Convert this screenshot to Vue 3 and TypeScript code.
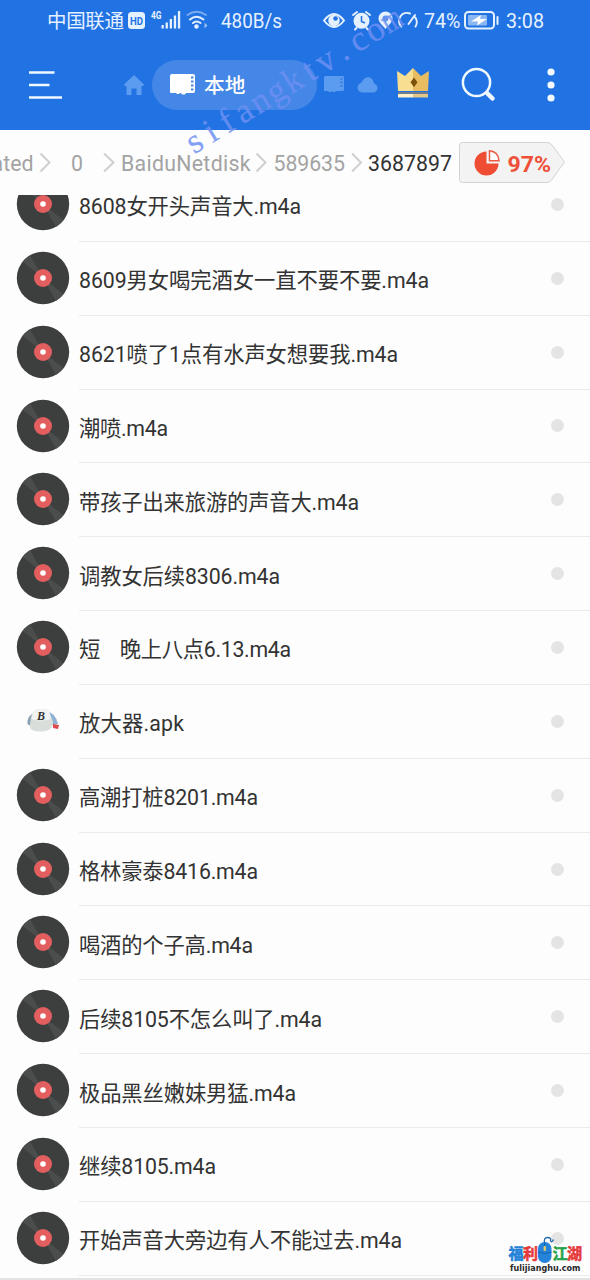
<script setup lang="ts">
interface FileRow {
  name: string
  kind: 'audio' | 'apk'
  width: number
}

const files: FileRow[] = [
  { name: '8608女开头声音大.m4a', kind: 'audio', width: 222 },
  { name: '8609男女喝完酒女一直不要不要.m4a', kind: 'audio', width: 350 },
  { name: '8621喷了1点有水声女想要我.m4a', kind: 'audio', width: 319 },
  { name: '潮喷.m4a', kind: 'audio', width: 89 },
  { name: '带孩子出来旅游的声音大.m4a', kind: 'audio', width: 280 },
  { name: '调教女后续8306.m4a', kind: 'audio', width: 201 },
  { name: '短\u00a0\u00a0\u00a0\u00a0晚上八点6.13.m4a', kind: 'audio', width: 212 },
  { name: '放大器.apk', kind: 'apk', width: 105 },
  { name: '高潮打桩8201.m4a', kind: 'audio', width: 179 },
  { name: '格林豪泰8416.m4a', kind: 'audio', width: 179 },
  { name: '喝酒的个子高.m4a', kind: 'audio', width: 174 },
  { name: '后续8105不怎么叫了.m4a', kind: 'audio', width: 243 },
  { name: '极品黑丝嫩妹男猛.m4a', kind: 'audio', width: 217 },
  { name: '继续8105.m4a', kind: 'audio', width: 137 },
  { name: '开始声音大旁边有人不能过去.m4a', kind: 'audio', width: 323 },
]

// Left edge of each letter, centred on an even pitch
const pitch = 19.3
const advances = [13.6, 9.7, 11.7, 15.5, 17.5, 17.5, 17.5, 9.7, 17.5, 8.8, 15.5, 17.5]
const siteX = advances.map((w, i) => (i * pitch - w / 2).toFixed(1)).join(' ')
</script>

<template>
  <div class="screen">
    <header class="top">
      <svg class="status" width="590" height="42" viewBox="0 0 590 42">
        <g fill="#e6f1ff">
          <text x="47" y="28" font-size="19.5" textLength="77">中国联通</text>
          <rect x="128" y="12" width="17" height="17" rx="3.5" />
          <text class="hd" x="130" y="24.5" font-size="10.5" textLength="13" lengthAdjust="spacingAndGlyphs">HD</text>
          <text x="151" y="18.5" font-size="10" font-weight="700" textLength="10.500" lengthAdjust="spacingAndGlyphs">4G</text>
          <rect x="161.500" y="25" width="2.300" height="3.500" />
          <rect x="165.600" y="22.500" width="2.300" height="6" />
          <rect x="169.700" y="19" width="2.300" height="9.500" />
          <rect x="173.800" y="15.500" width="2.300" height="13" />
          <rect x="177.900" y="11" width="2.300" height="17.500" />
          <circle cx="196.500" cy="26.500" r="2.200" />
          <path d="M204.500 22.500l3 3-3 3z" opacity=".6" />
          <text x="221" y="28.200" font-size="19.500" textLength="61" lengthAdjust="spacingAndGlyphs">480B/s</text>
          <text x="424" y="28.200" font-size="19.500" textLength="36.500" lengthAdjust="spacingAndGlyphs">74%</text>
          <text x="506" y="28.200" font-size="19.500" textLength="38" lengthAdjust="spacingAndGlyphs">3:08</text>
        </g>
        <g fill="none" stroke="#e6f1ff" stroke-width="2" stroke-linecap="round">
          <path d="M187.500 15q9-6.500 18.500 0" opacity=".45" />
          <path d="M190 19.500q6.500-5.500 13.500 0M193 23q3.500-3 7.500 0" />
          <path d="M324 20.500q10-13 20 0q-10 13-20 0z" />
          <path d="M353 15l4-3M370 15l-4-3M356.500 28l-1.500 1.500M366.500 28l1.500 1.500" />
          <path d="M401.300 26.500a8 8 0 0 1 8.700-13M414.500 16.500a8 8 0 0 1 1 10M408.500 24l6.500-9" />
          <rect x="465" y="12" width="29" height="16.500" rx="3.500" />
          <path d="M497.500 17v7" />
        </g>
        <circle cx="334" cy="20.500" r="5.700" fill="#e6f1ff" />
        <circle cx="335.500" cy="18.500" r="2.300" fill="#2173e3" />
        <circle cx="361.500" cy="20.800" r="8" fill="#e6f1ff" />
        <path d="M361.500 16v5.500l3.500 1.500" fill="none" stroke="#2173e3" stroke-width="1.500" />
        <path d="M385.500 29c-3-4-7-6.500-7-10.500a7 7 0 0 1 14 0c0 4-4 6.500-7 10.500z" fill="#e6f1ff" />
        <circle cx="385.500" cy="18.500" r="3" fill="#5b93ea" />
        <rect x="468" y="15" width="19" height="10.500" rx="1" fill="#8ab7f2" />
        <path d="M481 15l-10 6.500h7l-1 4 10-6.500h-7z" fill="#fff" />
      </svg>

      <nav class="toolbar">
        <svg class="menu" width="34" height="30" viewBox="0 0 34 30">
          <path d="M0 2.500h25.500M0 15h20.500M0 27.500h33" stroke="#eff7ff" stroke-width="2.400" />
        </svg>
        <svg class="home" width="20" height="20" viewBox="0 0 20 20">
          <path d="M10 0l10 9.500-1 1.500h-1.500v9h-5v-6.500h-5V20h-5v-9H1L0 9.500z" fill="#5b9bf0" />
        </svg>
        <div class="tab">
          <svg width="25" height="21" viewBox="0 0 25 21">
            <path d="M2 0h21a2 2 0 0 1 2 2v15a2 2 0 0 1-2 2h-7l-1 1.500h-3L11 19h-1l-1 1h-2l-1-1H1a1 1 0 0 1-1-1V2a2 2 0 0 1 2-2z" fill="#fff" />
            <path d="M21 3.500h2.500M21 7.500h2.500M21 11.500h2.500M21 15.500h2.500" stroke="#4487e6" stroke-width="1.800" />
          </svg>
          <span>本地</span>
        </div>
        <svg class="card" width="20" height="17" viewBox="0 0 20 17">
          <path d="M1 0h18l1 1v13l-1 1h-7l-1 1H9l-1-1-1 1H5l-1-1H0V1z" fill="#5b9bf0" />
          <path d="M16.500 3h2M16.500 6.500h2M16.500 10h2" stroke="#2d79e5" stroke-width="1.300" />
        </svg>
        <svg class="cloud" width="21" height="17" viewBox="0 0 21 17">
          <path d="M5 16.500a5 5 0 0 1-1.500-9.500Q5.500 6.500 6 4A5.500 5.500 0 0 1 16 5q.3 2 2 3a4.500 4.500 0 0 1-2 8.500z" fill="#5b9bf0" />
        </svg>
        <svg class="crown" width="34" height="32" viewBox="0 0 34 32">
          <path d="M1 4l8 5 8-8v23H2z" fill="#f8de91" />
          <path d="M33 4l-8 5-8-8v23h15z" fill="#e8bd61" />
          <path d="M2 25h30v2H2z" fill="#6e7c8d" />
          <path d="M2 27h15v3.500H2z" fill="#fff1cb" />
          <path d="M17 27h15v3.500H17z" fill="#e2c889" />
          <path d="M18 10.500l3.500 4.800-3.500 5-3.500-5z" fill="#7c5109" />
        </svg>
        <svg class="search" width="36" height="36" viewBox="0 0 36 36">
          <circle cx="15.500" cy="15.500" r="13.600" fill="none" stroke="#f0f9ff" stroke-width="2.500" />
          <path d="M24.500 25l2 2" stroke="#f0f9ff" stroke-width="2.500" />
          <path d="M26.500 26.500l5 5" stroke="#f0f9ff" stroke-width="4.500" stroke-linecap="round" />
        </svg>
        <svg class="more" width="8" height="34" viewBox="0 0 8 34">
          <g fill="#f4faff"><circle cx="4" cy="4" r="3.600" /><circle cx="4" cy="17" r="3.600" /><circle cx="4" cy="30" r="3.600" /></g>
        </svg>
      </nav>
    </header>

    <svg class="crumbs" width="590" height="65" viewBox="0 0 590 65">
      <g class="crumb">
        <text x="-8.500" y="40.800" textLength="42">ated</text>
        <text x="71" y="40.800">0</text>
        <text x="121" y="40.800" textLength="129.500">BaiduNetdisk</text>
        <text x="273.500" y="40.800" textLength="71.500">589635</text>
        <text class="current" x="368" y="40.800" textLength="84">3687897</text>
      </g>
      <path d="M40.500 23.500l9 9-9 9M104 23.500l9.500 9-9.500 9M256.500 23.500l9 9-9 9M352 23.500l9 9-9 9" fill="none" stroke="#cfcfcf" stroke-width="2" />
      <path d="M462.500 12.500H547q3 0 5 2.500l12.500 17L552 49.500q-2 3-5 3h-84.500q-3 0-3-3v-34q0-3 3-3z" fill="#f3f3f3" stroke="#d3d3d3" />
      <path d="M486.500 21.500v12h12a12 12 0 1 1-12-12z" fill="#ee4d34" />
      <path d="M489.500 20.800v10h9.500q-.5-9-9.500-10z" fill="#fff" stroke="#ee5a42" stroke-width="1.500" />
      <text class="percent" x="507.500" y="42" textLength="43.500" lengthAdjust="spacingAndGlyphs">97%</text>
    </svg>

    <main class="list">
      <div class="rows">
        <div v-for="file in files" :key="file.name" class="row">
          <div class="thumb">
            <svg v-if="file.kind === 'audio'" width="54" height="54" viewBox="-27 -27 54 54">
              <circle r="26.200" fill="#3d3f3e" />
              <path d="M0 0L-20.500-16.300A26.200 26.200 0 0 1-13-22.700zM0 0L20.500 16.300A26.200 26.200 0 0 1 13 22.700z" fill="#4b4d4c" />
              <circle r="9" fill="#e35f5f" />
              <circle r="2.800" fill="#fff" />
            </svg>
            <svg v-else width="54" height="54" viewBox="-27 -27 54 54">
              <path d="M4-9q8 0 11 12l-6 1z" fill="#8fb2d4" />
              <path d="M10 3l6 1-1 4-5-1z" fill="#dc4b4b" />
              <path d="M-11-7q-5 3-4.500 10l3 2z" fill="#8ba1b3" />
              <path d="M-10-9q2-3 8-3t8 2l4 11q0 9-12 9.500T-13 4q0-7 3-13z" fill="#d9dedb" />
              <path d="M-9.500-9q2-3 8-3t7.500 2l2 8q-9 3-19.500 0z" fill="#f1f3f2" />
              <text class="badge" x="-6" y="-1.500">B</text>
            </svg>
          </div>
          <div class="body">
            <svg class="name" :width="file.width + 6" height="32">
              <text x="0" y="24" :textLength="file.width">{{ file.name }}</text>
            </svg>
            <i class="dot" />
          </div>
        </div>
      </div>
    </main>

    <svg class="overlay" width="590" height="1280" viewBox="0 0 590 1280">
      <g class="site" transform="translate(200 151) rotate(-31.800)">
        <text :x="siteX">sifangktv.co</text>
        <text x="222" textLength="19.500" lengthAdjust="spacingAndGlyphs">m</text>
      </g>
      <g class="logo">
        <text x="508.500" y="1258.500" fill="#2483d8" stroke="#2483d8">福</text>
        <text x="523" y="1258.500" fill="#e53a3b" stroke="#e53a3b">利</text>
        <text x="552.500" y="1258.500" fill="#25a34a" stroke="#25a34a">江</text>
        <text x="567" y="1258.500" fill="#e53a3b" stroke="#e53a3b">湖</text>
      </g>
      <path d="M544.500 1243q-1-5.500 3-5.500t3 3q1 3 3-1" fill="none" stroke="#2667a5" stroke-width="1.300" />
      <rect x="538" y="1242" width="13.500" height="21" rx="6.500" fill="#2484d9" />
      <path d="M538 1252q7 3 13.500 0M544.700 1242v4" fill="none" stroke="#1764ad" />
      <rect x="543.600" y="1246" width="2.300" height="5" rx="1" fill="#e8cb62" />
      <text class="domain" x="510" y="1270.500" textLength="70.500" lengthAdjust="spacingAndGlyphs">fulijianghu.com</text>
    </svg>
  </div>
</template>

<style>
body { margin: 0; background: #fdfdfd; }
</style>

<style scoped>
.screen {
  position: relative;
  display: flex;
  flex-direction: column;
  width: 590px;
  height: 1280px;
  overflow: hidden;
  background: #fdfdfd;
  font-family: Roboto, "Noto Sans CJK SC", sans-serif;
}
svg { display: block; flex: none; }
.top { height: 129.500px; flex: none; background: #2173e3; }
.hd { fill: #2173e3; font-weight: 700; }
.toolbar { display: flex; align-items: center; height: 85px; padding-left: 29px; }
.home { margin-left: 61px; }
.tab {
  display: flex;
  align-items: center;
  box-sizing: border-box;
  width: 165px;
  height: 50px;
  margin-left: 8px;
  padding-left: 18px;
  gap: 9px;
  border-radius: 25px;
  background: #4487e6;
  color: #fff;
  font-size: 20.700px;
  font-weight: 500;
}
.tab span { margin-top: -2px; }
.card { margin-left: 7px; }
.cloud { margin-left: 13px; }
.crown { margin-left: 18px; margin-top: -4px; }
.search { margin-left: 31px; }
.more { margin-left: 50px; }
.crumb { font-size: 21.300px; fill: #a3a3a3; }
.crumb .current { fill: #333; }
.percent { font-size: 22px; font-weight: 700; fill: #ee5038; }
.list {
  flex: 1;
  overflow: hidden;
  box-sizing: border-box;
  border-bottom: 2px solid #e3e3e3;
}
.rows { margin-top: -26.500px; }
.row { display: flex; height: 73.850px; }
.thumb { width: 79px; flex: none; padding: 9px 0 0 15.500px; box-sizing: border-box; }
.body {
  display: flex;
  flex: 1;
  align-items: center;
  justify-content: space-between;
  box-sizing: border-box;
  padding-right: 26px;
  border-bottom: 1px solid #ebebeb;
}
.name { margin-top: 4px; font-size: 21.300px; fill: #333; }
.dot { width: 13px; height: 13px; border-radius: 50%; background: #e4e4e4; }
.badge { font: italic 700 12px "Liberation Serif", serif; fill: #333; }
.overlay { position: absolute; inset: 0; pointer-events: none; }
.site { font: 35px "Liberation Serif", serif; fill: #6d90f4; fill-opacity: .85; stroke: #6d90f4; stroke-width: .3px; stroke-opacity: .7; }
.logo { font-size: 15px; font-weight: 700; stroke-width: .6px; }
.domain { font: 700 9.500px "DejaVu Sans", sans-serif; fill: #282828; }
</style>
